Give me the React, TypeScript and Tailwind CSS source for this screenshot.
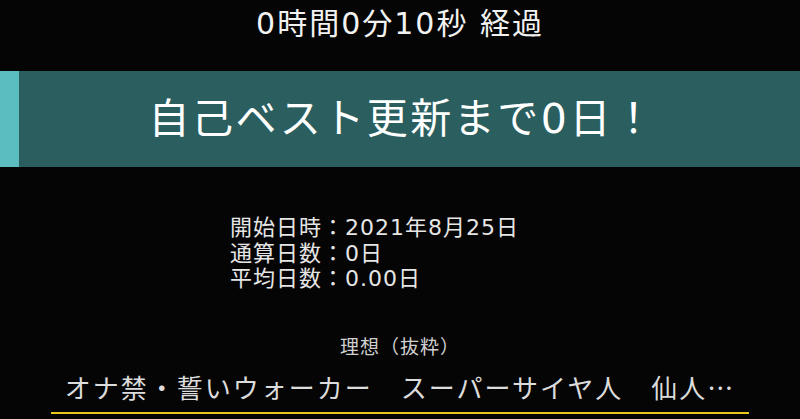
export default function App() {
  return (
    <div
      className="w-[800px] h-[419px] overflow-hidden bg-[#050505] text-white"
      style={{ fontFamily: '"DejaVu Sans", "Noto Sans CJK JP", sans-serif' }}
    >
      {/* 経過時間 */}
      <div className="h-[71px] flex justify-center pt-[4px]">
        <span className="text-[30px] leading-[40px] tracking-[2px] text-[#f2f2f2]">0時間0分10秒 経過</span>
      </div>

      {/* バナー */}
      <div className="flex h-[96px] bg-[#2b5f5f]">
        <div className="w-[19px] bg-[#5bbdc0]" />
        <div className="flex-1 flex items-center justify-center pr-[14px]">
          <span className="text-[41px] leading-none tracking-[2.5px] text-white">自己ベスト更新まで0日！</span>
        </div>
      </div>

      {/* 統計 */}
      <div className="pl-[230px] pt-[48px] text-[22px] leading-[25.5px] tracking-[1px] text-[#e6e6e6]">
        <div>開始日時：2021年8月25日</div>
        <div>通算日数：0日</div>
        <div>平均日数：0.00日</div>
      </div>

      {/* 理想 */}
      <div className="mt-[42px] flex justify-center">
        <span className="text-[19px] leading-[26px] tracking-[1px] text-[#d0d0d0]">理想（抜粋）</span>
      </div>
      <div className="mx-[51px] mt-[10px] border-b-2 border-[#e8c81a] flex justify-center pb-[6px]">
        <span className="text-[26px] leading-[34px] tracking-[2px] text-[#dcdcdc] whitespace-nowrap">
          オナ禁・誓いウォーカー　スーパーサイヤ人　仙人
          <span style={{ fontFamily: '"Noto Sans CJK JP", sans-serif' }}>…</span>
        </span>
      </div>
    </div>
  );
}
